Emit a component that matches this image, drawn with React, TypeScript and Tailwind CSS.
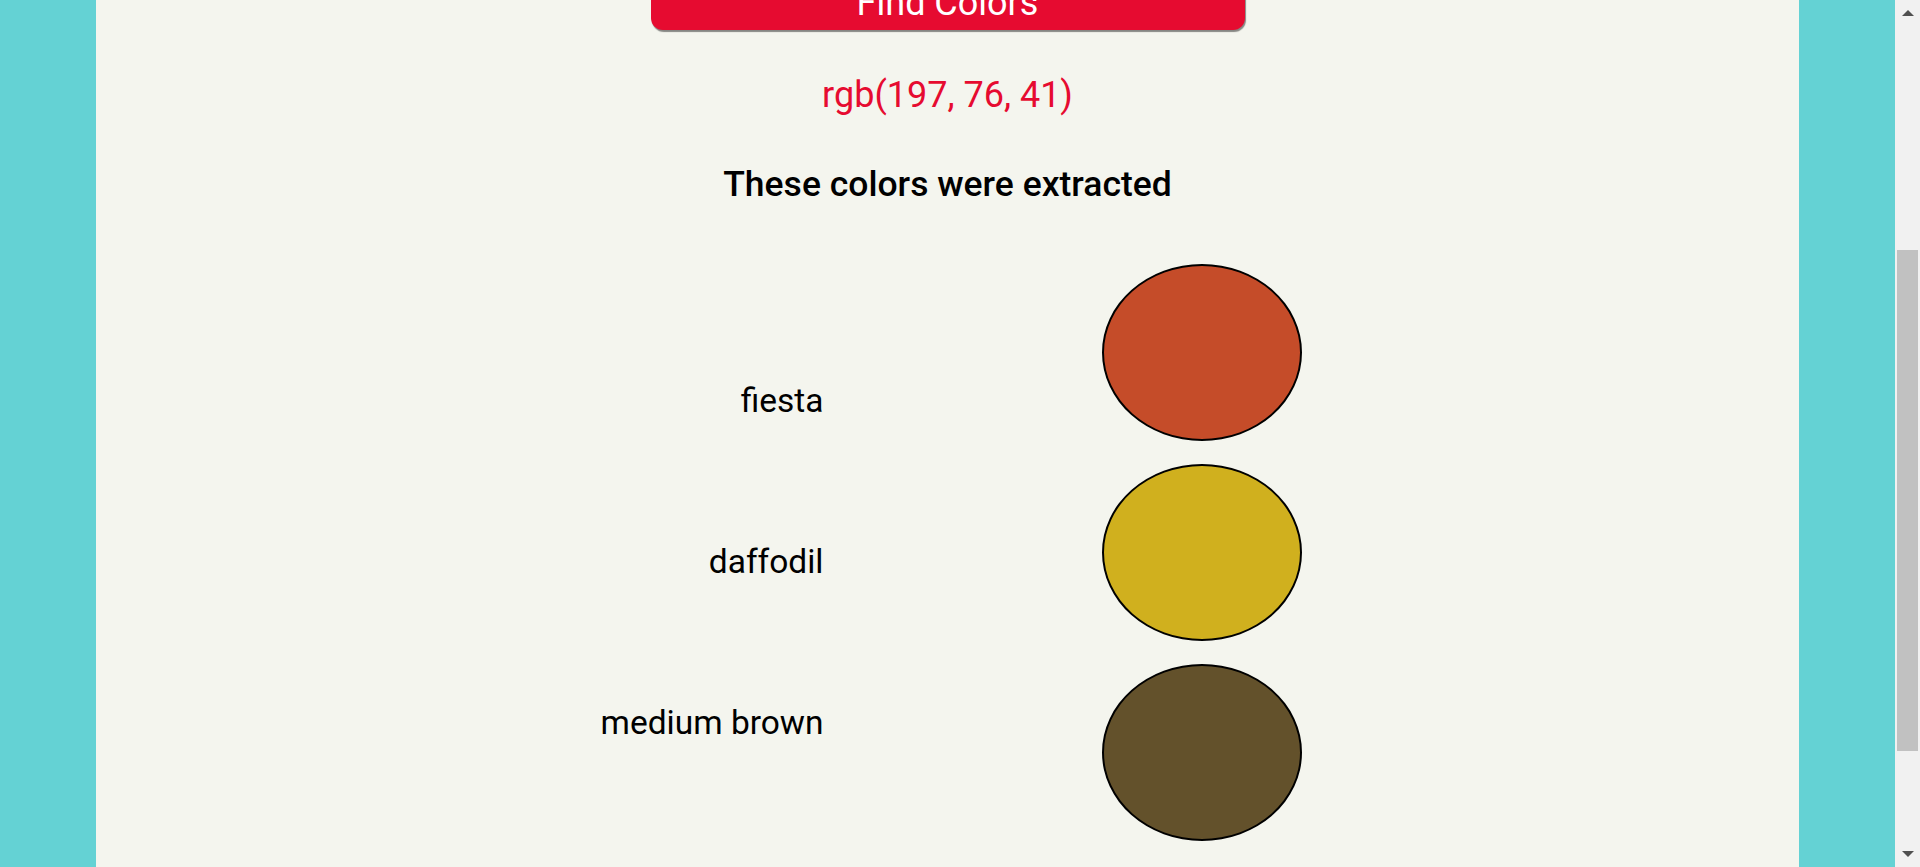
import React from 'react';

type Swatch = { name: string; color: string };

const swatches: Swatch[] = [
    { name: 'fiesta', color: '#c54c29' },
    { name: 'daffodil', color: '#d0b01e' },
    { name: 'medium brown', color: '#63512b' },
];

// fake browser scrollbar on the right edge
const ScrollBar: React.FC = () => (
    <div className="w-[25px] h-full bg-[#f1f1f1] flex flex-col items-center">
        <div className="h-[10px]" />
        <div className="w-0 h-0 border-l-[6px] border-r-[6px] border-b-[6px] border-l-transparent border-r-transparent border-b-[#505050]" />
        <div className="h-[234px]" />
        <div className="w-[21px] h-[501px] bg-[#c1c1c1]" />
        <div className="flex-1" />
        <div className="w-0 h-0 border-l-[6px] border-r-[6px] border-t-[6px] border-l-transparent border-r-transparent border-t-[#505050]" />
        <div className="h-[10px]" />
    </div>
);

export default function App() {
    return (
        <div className="w-[1920px] h-[867px] overflow-hidden flex" style={{ fontFamily: 'Roboto, "Liberation Sans", sans-serif' }}>
            <div className="w-[96px] h-full bg-[#64d2d4]" />
            <div className="flex-1 h-full bg-[#f4f5ee] flex flex-col items-center">
                <button className="mt-[-28px] w-[594px] pt-[10px] pb-[6px] bg-[#e60b30] text-white text-[36px] leading-[42px] rounded-[12px] shadow-[1px_2px_1px_rgba(0,0,0,0.45)]">
                    Find Colors
                </button>
                <p className="mt-[44px] text-[36px] leading-[42px] text-[#e60b30]">rgb(197, 76, 41)</p>
                <h2 className="mt-[47px] text-[35.5px] leading-[42px] font-medium text-black">These colors were extracted</h2>
                <div className="mt-[59px] w-full grid grid-cols-2">
                    <div className="pr-[124px] pt-[117px] flex flex-col items-end gap-[121px]">
                        {swatches.map((s) => (
                            <span key={s.name} className="text-[33.5px] leading-[40px] text-black">{s.name}</span>
                        ))}
                    </div>
                    <div className="pl-[154px] flex flex-col gap-[23px]">
                        {swatches.map((s) => (
                            <div
                                key={s.name}
                                className="w-[200px] h-[177px] rounded-[50%] border-2 border-black"
                                style={{ backgroundColor: s.color }}
                            />
                        ))}
                    </div>
                </div>
            </div>
            <div className="w-[96px] h-full bg-[#64d2d4]" />
            <ScrollBar />
        </div>
    );
}
